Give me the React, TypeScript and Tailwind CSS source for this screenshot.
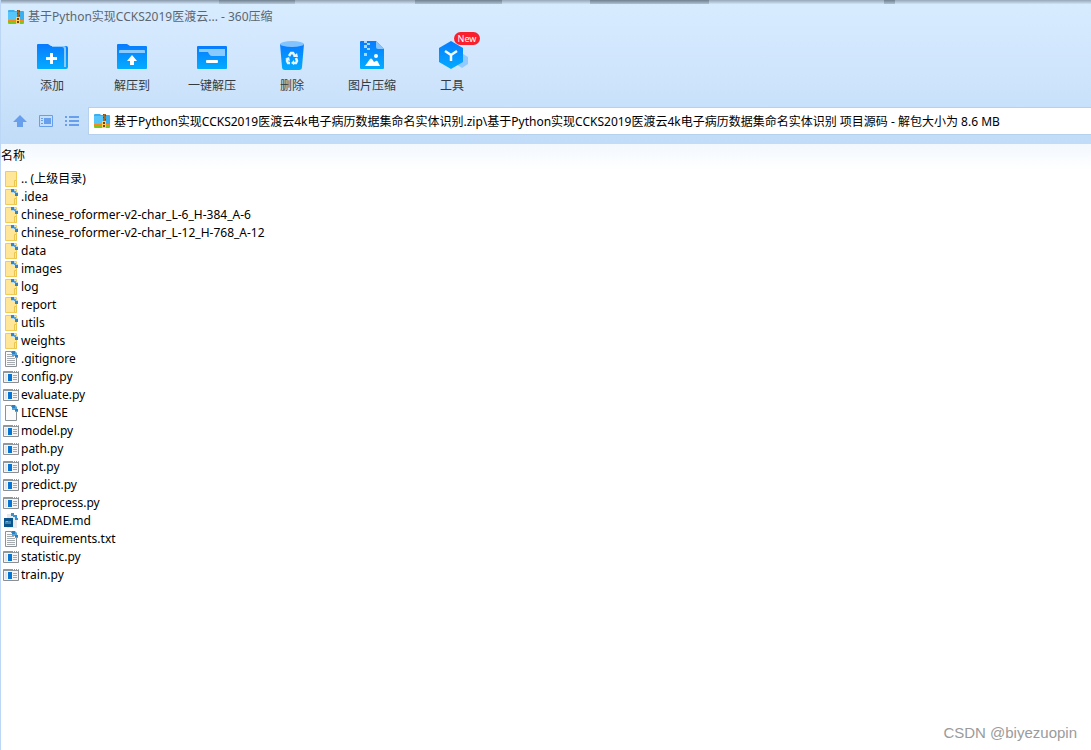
import React from 'react';

type Kind = 'up' | 'folder' | 'text' | 'python' | 'blank' | 'markdown';

const entries: { name: string; kind: Kind }[] = [
  { name: '.. (上级目录)', kind: 'up' },
  { name: '.idea', kind: 'folder' },
  { name: 'chinese_roformer-v2-char_L-6_H-384_A-6', kind: 'folder' },
  { name: 'chinese_roformer-v2-char_L-12_H-768_A-12', kind: 'folder' },
  { name: 'data', kind: 'folder' },
  { name: 'images', kind: 'folder' },
  { name: 'log', kind: 'folder' },
  { name: 'report', kind: 'folder' },
  { name: 'utils', kind: 'folder' },
  { name: 'weights', kind: 'folder' },
  { name: '.gitignore', kind: 'text' },
  { name: 'config.py', kind: 'python' },
  { name: 'evaluate.py', kind: 'python' },
  { name: 'LICENSE', kind: 'blank' },
  { name: 'model.py', kind: 'python' },
  { name: 'path.py', kind: 'python' },
  { name: 'plot.py', kind: 'python' },
  { name: 'predict.py', kind: 'python' },
  { name: 'preprocess.py', kind: 'python' },
  { name: 'README.md', kind: 'markdown' },
  { name: 'requirements.txt', kind: 'text' },
  { name: 'statistic.py', kind: 'python' },
  { name: 'train.py', kind: 'python' },
];

function FileIcon({ kind }: { kind: Kind }) {
  return (
    <svg width="16" height="16" viewBox="0 0 16 16" className="block shrink-0" aria-hidden="true">
      {(kind === 'up' || kind === 'folder') && (
        <>
          <path d="M2.5.5h11v15h-11z" fill="#ffe699" stroke="#f2cb57" />
          <path d="M11.5 9.500h2v6h-2z" fill="#ffe9a2" stroke="#edc64f" />
        </>
      )}
      {kind === 'folder' && (
        <>
          <path d="M8 0h4v3h3v3h-3V4H8z" fill="#b5d7ea" />
          <path d="M8 0h3v3H8zM12 4h3v3h-3z" fill="#2f86c9" />
          <path d="M11 2h2v2h-2z" fill="#5aa5d8" />
        </>
      )}
      {(kind === 'text' || kind === 'blank') && (
        <>
          <path d="M2.5.5H10L13.5 5v10.500h-11z" fill="#fbfbfb" stroke="#8c9195" />
          {kind === 'text' && (
            <path d="M4 3.500h5M4 5.500h7M4 7.500h8M4 9.500h8M4 11.500h8M4 13.500h8" stroke="#a6abaf" />
          )}
          <path d="M8 0h4l2 2v2h1v3h-3V5H9V2H8z" fill="#55a6dc" />
          <path d="M9 0h3v3H9zM12 4h3v2h-3z" fill="#2d80bf" />
        </>
      )}
      {kind === 'python' && (
        <>
          <path d="M.5 2.500h15v11H.5z" fill="#f5f5f5" stroke="#8b8f92" />
          <path d="M1 2h14v2H1z" fill="#92979a" />
          <path d="M10 2h1v1h-1zM12 2h1v1h-1zM14 2h1v1h-1z" fill="#fff" />
          <path d="M5 5h4v7H5z" fill="#0874d1" />
          <path d="M10 6.500h4M10 8.500h4M10 10.500h4" stroke="#a4a9ad" />
          <path d="M2 5h2v7H2z" fill="#dfe5e9" />
        </>
      )}
      {kind === 'markdown' && (
        <>
          <path d="M4 1h6l4 4v10H4z" fill="#e6e8ea" />
          <path d="M8 0h3v2h3v3h1v2h-3V4h-2V3H8z" fill="#3b91cf" />
          <path d="M1 5h9v9H1z" fill="#07558c" />
          <path d="M3 11V8l1 1 1-1v3M7 8v3" fill="none" stroke="#7fb4d8" />
        </>
      )}
    </svg>
  );
}

function ArchiveIcon() {
  return (
    <svg width="16" height="16" viewBox="0 0 16 16" className="block shrink-0" aria-hidden="true">
      <path d="M0 2q0-1 1-1h5l1 1h8q1 0 1 1v9H0z" fill="#39aff0" />
      <path d="M0 3h9v8H0z" fill="#56c5fa" />
      <path d="M0 11h16v1H0z" fill="#f58a1e" />
      <path d="M0 12h16v2q0 1-1 1H1q-1 0-1-1z" fill="#7cc61e" />
      <path d="M9 1h3v14H9z" fill="#a5661d" />
      <path d="M9 1h1v1H9zM11 2h1v1h-1zM9 4h1v1H9zM11 6h1v1h-1z" fill="#245a84" />
      <path d="M8 8h4v7H8z" fill="#ffd05a" />
      <path d="M9 9h2v2H9zM9 12h2v2H9z" fill="#74410f" />
    </svg>
  );
}

function Blue({ id }: { id: string }) {
  return (
    <linearGradient id={id} x1="0" y1="0" x2="0" y2="1">
      <stop offset="0" stopColor="#087bff" />
      <stop offset="1" stopColor="#03acff" />
    </linearGradient>
  );
}

const tools: { label: string; badge?: string; drawing: React.ReactNode }[] = [
  {
    label: '添加',
    drawing: (
      <>
        <defs><Blue id="add" /></defs>
        <path d="M1 5q0-1 1-1h10l3 2h15q2 0 2 2v19q0 2-2 2H2q-1 0-1-1z" fill="url(#add)" />
        <path d="M16 6h12q2 0 2 2v19h-2V9q0-2-2-2H16z" fill="#8bcaff" />
        <path d="M15.500 13v11M10 18.500h11" stroke="#fff" strokeWidth="3" />
      </>
    ),
  },
  {
    label: '解压到',
    drawing: (
      <>
        <defs><Blue id="extract" /></defs>
        <path d="M1 5q0-1 1-1h9l3 2h16q1 0 1 1v21q0 1-1 1H2q-1 0-1-1z" fill="url(#extract)" />
        <path d="M3 11q0-1 1-1h24q1 0 1 1v2H3z" fill="#8bcaff" />
        <path d="m16 15 5 6h-3v4h-4v-4h-3z" fill="#fff" />
      </>
    ),
  },
  {
    label: '一键解压',
    drawing: (
      <>
        <defs><Blue id="quick" /></defs>
        <rect x="1" y="6" width="30" height="23" rx="1" fill="url(#quick)" />
        <path d="M3 9h26v7H16q-2 0-3-2l-1-2H3z" fill="#8bcaff" />
        <rect x="10" y="20" width="12" height="3" rx="1" fill="#fff" />
      </>
    ),
  },
  {
    label: '删除',
    drawing: (
      <>
        <defs><Blue id="remove" /></defs>
        <path d="M4 4h24l-2 23q0 3-3 3H9q-3 0-3-3z" fill="url(#remove)" />
        <ellipse cx="16" cy="4" rx="12" ry="3" fill="#83c4ff" />
        <g fill="none" stroke="#e4f5ff" strokeWidth="2.500">
          <path d="m13 16 2-3h2l2 3" />
          <path d="m20 18 1 3-1 2h-3" />
          <path d="M14 23h-2l-1-2 1-3" />
        </g>
        <path d="m17 17 5 0-1-4zM18 20v5l-3-2zM9 19l4-2 1 4z" fill="#e4f5ff" />
      </>
    ),
  },
  {
    label: '图片压缩',
    drawing: (
      <>
        <defs><Blue id="picture" /></defs>
        <path d="M4 2q0-1 1-1h15l8 8v19q0 1-1 1H5q-1 0-1-1z" fill="url(#picture)" />
        <path d="M20 1v6q0 2 2 2h6z" fill="#86c6ff" />
        <path d="M8 1h3v2H8zM11 3h3v2h-3zM8 5h3v3H8zM11 8h3v2h-3zM8 13h3v3H8z" fill="#a8d7ff" />
        <circle cx="20" cy="16" r="2" fill="#fff" />
        <path d="m9 26 5-7q1-1 2 0l2 3 2-1q1-1 2 1l2 4z" fill="#fff" />
      </>
    ),
  },
  {
    label: '工具',
    badge: 'New',
    drawing: (
      <>
        <defs><Blue id="kit" /></defs>
        <path d="m27 14 5 3v7l-6 4-6-4v-4z" fill="#91caff" />
        <path d="m15 1 12 7v14l-12 7-12-7V8z" fill="url(#kit)" />
        <path d="m9 11 6 4 6-4M15 15v6" fill="none" stroke="#f2fbff" strokeWidth="2.500" />
      </>
    ),
  },
];

export default function App() {
  return (
    <div className="flex min-h-screen flex-col border-l border-[#bcd6f5] bg-white font-['Noto_Sans','Noto_Sans_CJK_SC',sans-serif] text-xs text-black">
      <header className="bg-linear-to-b from-[#d8ecff] via-[#cfe5fc] to-[#c1dcf8]">
        <div className="flex h-1">
          <div className="h-full w-1/5 bg-linear-to-b from-[#8798aa] to-[#d0e2f4]" />
          <div className="h-full w-[7%] bg-linear-to-b from-[#6f8090] to-[#b9cbdc]" />
          <div className="h-full w-[11%] bg-linear-to-b from-[#8f9fb0] to-[#d0e2f4]" />
          <div className="h-full w-[8%] bg-linear-to-b from-[#6f8090] to-[#b0c1d1]" />
          <div className="h-full w-[8%] bg-linear-to-b from-[#95a7b9] to-[#d0e2f4]" />
          <div className="h-full w-[11%] bg-linear-to-b from-[#6f8090] to-[#b0c1d1]" />
          <div className="h-full w-[16%] bg-linear-to-b from-[#95a7b9] to-[#d0e2f4]" />
          <div className="h-full w-[1%] bg-linear-to-b from-[#6f8090] to-[#b0c1d1]" />
          <div className="h-full grow bg-linear-to-b from-[#95a7b9] to-[#d0e2f4]" />
        </div>
        <div className="flex h-[26px] items-center gap-1 pl-[7px] text-[#5d6670]">
          <ArchiveIcon />
          <h1>基于Python实现CCKS2019医渡云... - 360压缩</h1>
        </div>
        <nav className="flex h-[77px] pt-[10px] pl-[11px]" aria-label="工具栏">
          {tools.map((tool) => (
            <button key={tool.label} type="button" className="relative flex w-20 flex-col items-center text-[#333b43]">
              <svg width="32" height="32" viewBox="0 0 32 32" className="block" aria-hidden="true">
                {tool.drawing}
              </svg>
              <span className="mt-[5px] leading-[18px]">{tool.label}</span>
              {tool.badge && (
                <span className="absolute -top-2 left-[42px] h-[13px] w-[26px] rounded-full bg-[#f91f2d] text-center text-[9px] leading-[13px] text-white">
                  {tool.badge}
                </span>
              )}
            </button>
          ))}
        </nav>
        <div className="flex h-[37px] items-start">
          <div className="flex h-7 w-[87px] shrink-0 items-center gap-3 pl-3 text-[#689fed]">
            <button type="button" aria-label="向上">
              <svg width="14" height="14" viewBox="0 0 14 14" fill="currentColor" className="block"><path d="m7 1 7 7h-4v5H4V8H0z" /></svg>
            </button>
            <button type="button" aria-label="详细视图">
              <svg width="14" height="14" viewBox="0 0 14 14" className="block">
                <path d="M.5 1.500h13v11H.5z" fill="none" stroke="currentColor" />
                <path d="M5 4h7v6H5zM2 4h2v1H2zM2 6h2v1H2zM2 9h2v1H2z" fill="currentColor" />
              </svg>
            </button>
            <button type="button" aria-label="列表视图">
              <svg width="14" height="14" viewBox="0 0 14 14" fill="currentColor" className="block"><path d="M0 2h2v2H0zM4 2h10v2H4zM0 6h2v2H0zM4 6h10v2H4zM0 10h2v2H0zM4 10h10v2H4z" /></svg>
            </button>
          </div>
          <div className="flex h-7 min-w-0 grow items-center gap-1 border border-r-0 border-[#b5d1ee] bg-white pl-[5px]">
            <ArchiveIcon />
            <input
              aria-label="路径"
              readOnly
              className="h-full min-w-0 grow bg-transparent outline-none"
              defaultValue="基于Python实现CCKS2019医渡云4k电子病历数据集命名实体识别.zip\基于Python实现CCKS2019医渡云4k电子病历数据集命名实体识别 项目源码 - 解包大小为 8.6 MB"
            />
          </div>
        </div>
      </header>
      <main className="grow">
        <table className="w-full border-collapse">
          <thead>
            <tr className="h-[26px] bg-linear-to-b from-[#f2f8fe] to-white">
              <th scope="col" className="p-0 pb-[2px] text-left font-normal">名称</th>
            </tr>
          </thead>
          <tbody>
            {entries.map((entry) => (
              <tr key={entry.name} className="h-[18px]">
                <td className="p-0">
                  <div className="flex h-[18px] items-center gap-[2px] pl-[2px] leading-[18px]">
                    <FileIcon kind={entry.kind} />
                    <span>{entry.name}</span>
                  </div>
                </td>
              </tr>
            ))}
          </tbody>
        </table>
      </main>
      <footer className="pr-[14px] pb-[5px] text-right font-['Liberation_Sans',sans-serif] text-[15px] leading-6 text-[#9b9b9b]">
        CSDN @biyezuopin
      </footer>
    </div>
  );
}
